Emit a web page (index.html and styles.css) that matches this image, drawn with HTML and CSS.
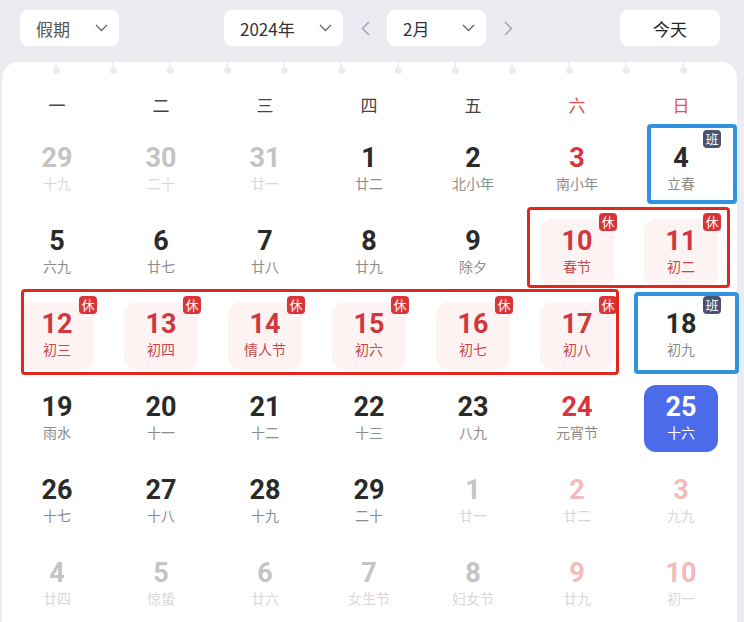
FILE: index.html
```html
<!DOCTYPE html>
<html lang="zh-CN">
<head>
  <meta charset="UTF-8">
  <title>日历</title>
  <link rel="stylesheet" href="styles.css">
</head>
<body>
  <div class="topbar">
    <div class="select sel-holiday">假期
      <svg class="chev" width="13" height="8" viewBox="0 0 13 8"><polyline points="1,1 6.5,6.5 12,1"/></svg>
    </div>
    <div class="select sel-year">2024年
      <svg class="chev" width="13" height="8" viewBox="0 0 13 8"><polyline points="1,1 6.5,6.5 12,1"/></svg>
    </div>
    <div class="arrow"><svg width="9" height="15" viewBox="0 0 9 15"><polyline points="8,1 1.5,7.5 8,14"/></svg></div>
    <div class="select sel-month">2月
      <svg class="chev" width="13" height="8" viewBox="0 0 13 8"><polyline points="1,1 6.5,6.5 12,1"/></svg>
    </div>
    <div class="arrow"><svg width="9" height="15" viewBox="0 0 9 15"><polyline points="1,1 7.5,7.5 1,14"/></svg></div>
    <div class="btn-today">今天</div>
  </div>

  <div class="card">
    <div class="rings">
      <i></i><i></i><i></i><i></i><i></i><i></i><i></i><i></i><i></i><i></i><i></i><i></i>
    </div>
    <div class="weekdays">
      <span>一</span><span>二</span><span>三</span><span>四</span><span>五</span><span class="we">六</span><span class="we">日</span>
    </div>
    <div class="days">
      <!-- 第1行 -->
      <div class="day other"><b>29</b><small>十九</small></div>
      <div class="day other"><b>30</b><small>二十</small></div>
      <div class="day other"><b>31</b><small>廿一</small></div>
      <div class="day"><b>1</b><small>廿二</small></div>
      <div class="day"><b>2</b><small>北小年</small></div>
      <div class="day red"><b>3</b><small>南小年</small></div>
      <div class="day"><b>4</b><small>立春</small><em class="tag work">班</em></div>
      <!-- 第2行 -->
      <div class="day"><b>5</b><small>六九</small></div>
      <div class="day"><b>6</b><small>廿七</small></div>
      <div class="day"><b>7</b><small>廿八</small></div>
      <div class="day"><b>8</b><small>廿九</small></div>
      <div class="day"><b>9</b><small>除夕</small></div>
      <div class="day rest"><b>10</b><small>春节</small><em class="tag">休</em></div>
      <div class="day rest"><b>11</b><small>初二</small><em class="tag">休</em></div>
      <!-- 第3行 -->
      <div class="day rest"><b>12</b><small>初三</small><em class="tag">休</em></div>
      <div class="day rest"><b>13</b><small>初四</small><em class="tag">休</em></div>
      <div class="day rest"><b>14</b><small>情人节</small><em class="tag">休</em></div>
      <div class="day rest"><b>15</b><small>初六</small><em class="tag">休</em></div>
      <div class="day rest"><b>16</b><small>初七</small><em class="tag">休</em></div>
      <div class="day rest"><b>17</b><small>初八</small><em class="tag">休</em></div>
      <div class="day"><b>18</b><small>初九</small><em class="tag work">班</em></div>
      <!-- 第4行 -->
      <div class="day"><b>19</b><small>雨水</small></div>
      <div class="day"><b>20</b><small>十一</small></div>
      <div class="day"><b>21</b><small>十二</small></div>
      <div class="day"><b>22</b><small>十三</small></div>
      <div class="day"><b>23</b><small>八九</small></div>
      <div class="day red"><b>24</b><small>元宵节</small></div>
      <div class="day today"><b>25</b><small>十六</small></div>
      <!-- 第5行 -->
      <div class="day"><b>26</b><small>十七</small></div>
      <div class="day"><b>27</b><small>十八</small></div>
      <div class="day"><b>28</b><small>十九</small></div>
      <div class="day"><b>29</b><small>二十</small></div>
      <div class="day other"><b>1</b><small>廿一</small></div>
      <div class="day other we"><b>2</b><small>廿二</small></div>
      <div class="day other we"><b>3</b><small>九九</small></div>
      <!-- 第6行 -->
      <div class="day other"><b>4</b><small>廿四</small></div>
      <div class="day other"><b>5</b><small>惊蛰</small></div>
      <div class="day other"><b>6</b><small>廿六</small></div>
      <div class="day other"><b>7</b><small>女生节</small></div>
      <div class="day other"><b>8</b><small>妇女节</small></div>
      <div class="day other we"><b>9</b><small>廿九</small></div>
      <div class="day other we"><b>10</b><small>初一</small></div>
    </div>
  </div>

  <!-- 标注框 -->
  <div class="mark blue mark-a"></div>
  <div class="mark red mark-b"></div>
  <div class="mark red mark-c"></div>
  <div class="mark blue mark-d"></div>
</body>
</html>
```

FILE: styles.css
```css
html, body {
  margin: 0;
  padding: 0;
  width: 100%;
  height: 100%;
  overflow: hidden;
  background: #ebecf1;
  font-family: "Noto Sans CJK SC", "Noto Sans", sans-serif;
}
body {
  position: relative;
}

/* 顶部工具栏 */
.topbar {
  height: 62px;
  box-sizing: border-box;
  padding: 10px 0 0 20px;
  display: flex;
  align-items: flex-start;
}
.select, .btn-today {
  height: 36px;
  background: #fff;
  border-radius: 8px;
  box-sizing: border-box;
  display: flex;
  align-items: center;
  font-size: 17px;
  color: #333;
}
.select {
  padding: 0 11px 0 16px;
  justify-content: space-between;
}
.sel-holiday { width: 99px; color: #555; }
.sel-year { width: 119px; margin-left: 105px; }
.sel-month { width: 99px; }
.chev polyline {
  fill: none;
  stroke: #666;
  stroke-width: 1.3;
}
.arrow {
  width: 44px;
  height: 36px;
  display: flex;
  align-items: center;
  justify-content: center;
}
.arrow polyline {
  fill: none;
  stroke: #a0a0a8;
  stroke-width: 1.4;
}
.btn-today {
  width: 100px;
  margin-left: 90px;
  justify-content: center;
  color: #222;
}

/* 日历卡片 */
.card {
  margin: 0 7px 0 2px;
  height: 560px;
  background: #fff;
  border-radius: 16px 16px 0 0;
}
.rings {
  height: 16px;
  display: flex;
  gap: 51px;
  padding-left: 51px;
}
.rings i {
  width: 6px;
  height: 16px;
  position: relative;
}
.rings i::before {
  content: "";
  position: absolute;
  left: 2px;
  top: 0;
  width: 2px;
  height: 6px;
  background: #eeeff2;
}
.rings i::after {
  content: "";
  position: absolute;
  left: 0;
  top: 5px;
  width: 7px;
  height: 7px;
  border-radius: 50%;
  background: #ececf0;
}
.weekdays {
  display: grid;
  grid-template-columns: repeat(7, 104px);
  padding-left: 3px;
  height: 52px;
  align-items: center;
  font-size: 17px;
  color: #444;
  text-align: center;
}
.weekdays .we { color: #e0504f; }

.days {
  display: grid;
  grid-template-columns: repeat(7, 104px);
  grid-auto-rows: 67px;
  row-gap: 16px;
  padding: 6px 0 0 3px;
  justify-items: center;
}
.day {
  width: 74px;
  height: 67px;
  border-radius: 12px;
  position: relative;
  display: flex;
  flex-direction: column;
  align-items: center;
  box-sizing: border-box;
  padding-top: 7px;
}
.day b {
  font-family: Roboto, "DejaVu Sans", sans-serif;
  font-weight: 700;
  font-size: 27px;
  line-height: 30px;
  color: #2a2a2a;
}
.day small {
  font-size: 14px;
  line-height: 20px;
  color: #8c8c8c;
}
.day.red b { color: #d9343b; }
.day.other b { color: #c4c4c4; }
.day.other small { color: #d8d8d8; }
.day.other.we b { color: #f0bcbc; }
.day.rest {
  background: #fdf3f3;
}
.day.rest b { color: #d2373e; }
.day.rest small { color: #c9484d; }
.day.today {
  background: #4b6bea;
}
.day.today b, .day.today small { color: #fff; }

.tag {
  position: absolute;
  top: -6px;
  right: -3px;
  width: 18px;
  height: 18px;
  border-radius: 4px;
  background: #d8353b;
  color: #fff;
  font-style: normal;
  font-size: 13px;
  line-height: 18px;
  text-align: center;
}
.tag.work { background: #4a5270; }

/* 标注框 */
.mark {
  position: absolute;
  box-sizing: border-box;
  border: 4px solid;
  border-radius: 4px;
}
.mark.blue { border-color: #2f93e0; }
.mark.red { border-color: #e0281f; border-width: 3px; }
.mark-a { left: 647px; top: 124px; width: 90px; height: 80px; }
.mark-b { left: 527px; top: 207px; width: 203px; height: 81px; }
.mark-c { left: 21px; top: 289px; width: 598px; height: 86px; }
.mark-d { left: 634px; top: 292px; width: 105px; height: 82px; }
```
